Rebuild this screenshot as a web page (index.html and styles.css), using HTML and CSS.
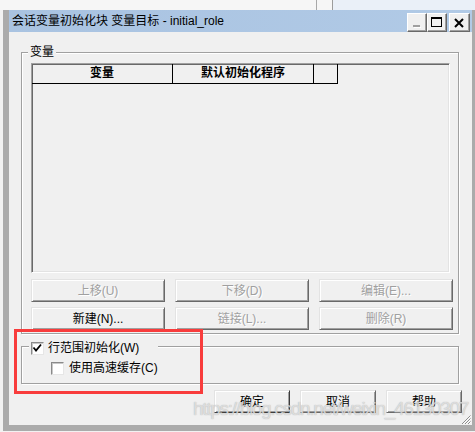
FILE: index.html
```html
<!DOCTYPE html>
<html lang="zh">
<head>
<meta charset="utf-8">
<title>会话变量初始化块</title>
<link rel="stylesheet" href="styles.css">
</head>
<body>
<div class="screen">
  <div class="window">
    <div class="titlebar">
      <span class="title">会话变量初始化块 变量目标 - initial_role</span>
      <div class="caption-btns">
        <span class="cbtn">
          <svg width="18" height="17" viewBox="0 0 18 17"><rect x="5" y="11" width="7" height="2" fill="#a0a0a0"/><rect x="6" y="13" width="7" height="1" fill="#ffffff"/></svg>
        </span>
        <span class="cbtn">
          <svg width="18" height="17" viewBox="0 0 18 17"><rect x="3.5" y="3.5" width="10" height="9" fill="none" stroke="#000"/><rect x="3" y="3" width="11" height="2" fill="#000"/></svg>
        </span>
        <span class="cbtn close">
          <svg width="19" height="17" viewBox="0 0 19 17"><path d="M5 5 L13 13 M13 5 L5 13" stroke="#000" stroke-width="2"/></svg>
        </span>
      </div>
    </div>
    <div class="client">
      <div class="group g-vars">
        <div class="legend">变量</div>
        <div class="listview">
          <div class="lv-header">
            <div class="lv-col c1">变量</div>
            <div class="lv-col c2">默认初始化程序</div>
            <div class="lv-col c3"></div>
          </div>
        </div>
        <div class="btn-grid">
          <div class="btn disabled">上移(U)</div>
          <div class="btn disabled">下移(D)</div>
          <div class="btn disabled">编辑(E)...</div>
          <div class="btn">新建(N)...</div>
          <div class="btn disabled">链接(L)...</div>
          <div class="btn disabled">删除(R)</div>
        </div>
      </div>
      <div class="group g-row">
        <div class="legend check-legend">
          <span class="chk"><svg width="11" height="11" viewBox="0 0 11 11"><path d="M1.5 4.5 L4 7.5 L9 1.5" fill="none" stroke="#000" stroke-width="1.8"/></svg></span>
          <span>行范围初始化(W)</span>
        </div>
        <div class="check sub">
          <span class="chk"></span>
          <span>使用高速缓存(C)</span>
        </div>
      </div>
      <div class="dlg-btns">
        <div class="btn dbtn default">确定</div>
        <div class="btn dbtn">取消</div>
        <div class="btn dbtn">帮助</div>
      </div>
      <div class="grip-row">
        <svg width="11" height="9" viewBox="0 0 11 9"><path d="M10.5 0.5 L2 9 M10.5 3.5 L5 9 M10.5 6.5 L8 9" stroke="#8c8c8c" stroke-width="1"/><path d="M11 1 L3 9 M11 4 L6 9 M11 7 L9 9" stroke="#ffffff" stroke-width="0.8"/></svg>
      </div>
    </div>
  </div>
  <div class="annot"></div>
  <div class="watermark">https://blog.csdn.net/weixin_46130307</div>
</div>
</body>
</html>
```

FILE: styles.css
```css
* { box-sizing: border-box; }
html, body { margin: 0; padding: 0; }
body {
  font-family: "Liberation Sans", "Noto Sans CJK SC", sans-serif;
  font-size: 12px;
  color: #000;
  background: #f4f4f4;
}
.screen {
  position: relative;
  width: 475px;
  height: 432px;
  overflow: hidden;
  padding: 10px 0 0 3px;
  background-color: #f2f2f2;
  background-image: linear-gradient(to right, #f6f6f6 316px, #a8a8a8 316px 317px, #f6f6f6 317px 332px, #9c9c9c 332px 333px, #eaf0f8 333px);
  background-size: 100% 10px;
  background-repeat: no-repeat;
}
.window {
  width: 472px;
  border-left: 6px solid #ababab;
  border-right: 3px solid #ababab;
  border-bottom: 6px solid #ababab;
  background: #f0f0f0;
}
.titlebar {
  height: 22px;
  display: flex;
  align-items: center;
  padding: 0 2px 0 3px;
  background: linear-gradient(to right, #a9c3e1, #b1cae6);
}
.title {
  line-height: 16px;
  white-space: nowrap;
  color: #000;
}
.caption-btns {
  margin-left: auto;
  align-self: flex-end;
  display: flex;
}
.cbtn {
  width: 20px;
  height: 19px;
  display: flex;
  align-items: center;
  justify-content: center;
  background: #f0f0f0;
  border: 1px solid;
  border-color: #ffffff #696969 #696969 #ffffff;
  box-shadow: inset -1px -1px 0 #a0a0a0;
}
.cbtn.close {
  width: 21px;
  margin-left: 2px;
}
.client {
  height: 393px;
  display: flex;
  flex-direction: column;
  align-items: flex-start;
  padding-left: 12px;
  background: #f0f0f0;
}
.group {
  width: 438px;
  border: 1px solid #a0a0a0;
  box-shadow: inset 1px 1px 0 #ffffff, 1px 1px 0 #ffffff;
}
.g-vars {
  margin-top: 20px;
  padding: 0 0 3px 9px;
}
.legend {
  width: fit-content;
  line-height: 16px;
  background: #f0f0f0;
  white-space: nowrap;
}
.g-vars .legend {
  margin: -9px 0 0 -3px;
  padding: 0 2px;
}
.listview {
  margin-top: 3px;
  width: 419px;
  height: 210px;
  border: 1px solid;
  border-color: #a0a0a0 #ffffff #ffffff #a0a0a0;
  box-shadow: inset 1px 1px 0 #696969, inset -1px -1px 0 #e3e3e3;
  background: #f0f0f0;
}
.lv-header {
  display: flex;
  height: 20px;
}
.lv-col {
  height: 20px;
  line-height: 19px;
  text-align: center;
  font-weight: bold;
  border-right: 1px solid #000;
  border-bottom: 1px solid #000;
  white-space: nowrap;
}
.c1 { width: 141px; }
.c2 { width: 141px; }
.c3 { width: 24px; }
.btn-grid {
  margin-top: 6px;
  display: grid;
  grid-template-columns: 134px 134px 134px;
  grid-auto-rows: 23px;
  column-gap: 10px;
  row-gap: 5px;
}
.btn {
  display: flex;
  align-items: center;
  justify-content: center;
  background: #f0f0f0;
  border: 1px solid;
  border-color: #e3e3e3 #696969 #696969 #e3e3e3;
  box-shadow: inset 1px 1px 0 #ffffff, inset -1px -1px 0 #a0a0a0;
  white-space: nowrap;
  line-height: 16px;
}
.btn.disabled {
  color: #a0a0a0;
  text-shadow: 1px 1px 0 #ffffff;
}
.g-row {
  margin-top: 12px;
  padding: 0 0 7px 0;
}
.check-legend {
  margin: -7px 0 0 7px;
  padding: 0 19px 0 2px;
  display: flex;
  align-items: center;
  gap: 4px;
}
.chk {
  width: 13px;
  height: 13px;
  flex: none;
  display: flex;
  align-items: center;
  justify-content: center;
  background: #ffffff;
  border: 1px solid;
  border-color: #8a8a8a #e6e6e6 #e6e6e6 #8a8a8a;
  box-shadow: inset 1px 1px 0 #c8c8c8;
}
.check {
  display: flex;
  align-items: center;
  line-height: 16px;
}
.sub {
  margin: 4px 0 0 29px;
  gap: 5px;
}
.dlg-btns {
  align-self: stretch;
  margin-top: 6px;
  display: flex;
  justify-content: flex-end;
  gap: 10px;
  padding-right: 10px;
}
.dbtn {
  width: 76px;
  height: 23px;
}
.dbtn.default {
  border-color: #e3e3e3 #3c3c3c #3c3c3c #e3e3e3;
}
.grip-row {
  align-self: stretch;
  margin-top: 2px;
  display: flex;
  justify-content: flex-end;
  padding-right: 1px;
}
.annot {
  position: absolute;
  left: 14px;
  top: 329px;
  width: 189px;
  height: 65px;
  border: 3px solid #f83c3c;
}
.watermark {
  position: absolute;
  left: 193px;
  top: 398px;
  font-size: 19px;
  letter-spacing: -1.3px;
  line-height: 22px;
  white-space: nowrap;
  color: rgba(235, 235, 235, 0.75);
  text-shadow: 0 0 1px rgba(110, 110, 110, 0.55);
  pointer-events: none;
}
```
